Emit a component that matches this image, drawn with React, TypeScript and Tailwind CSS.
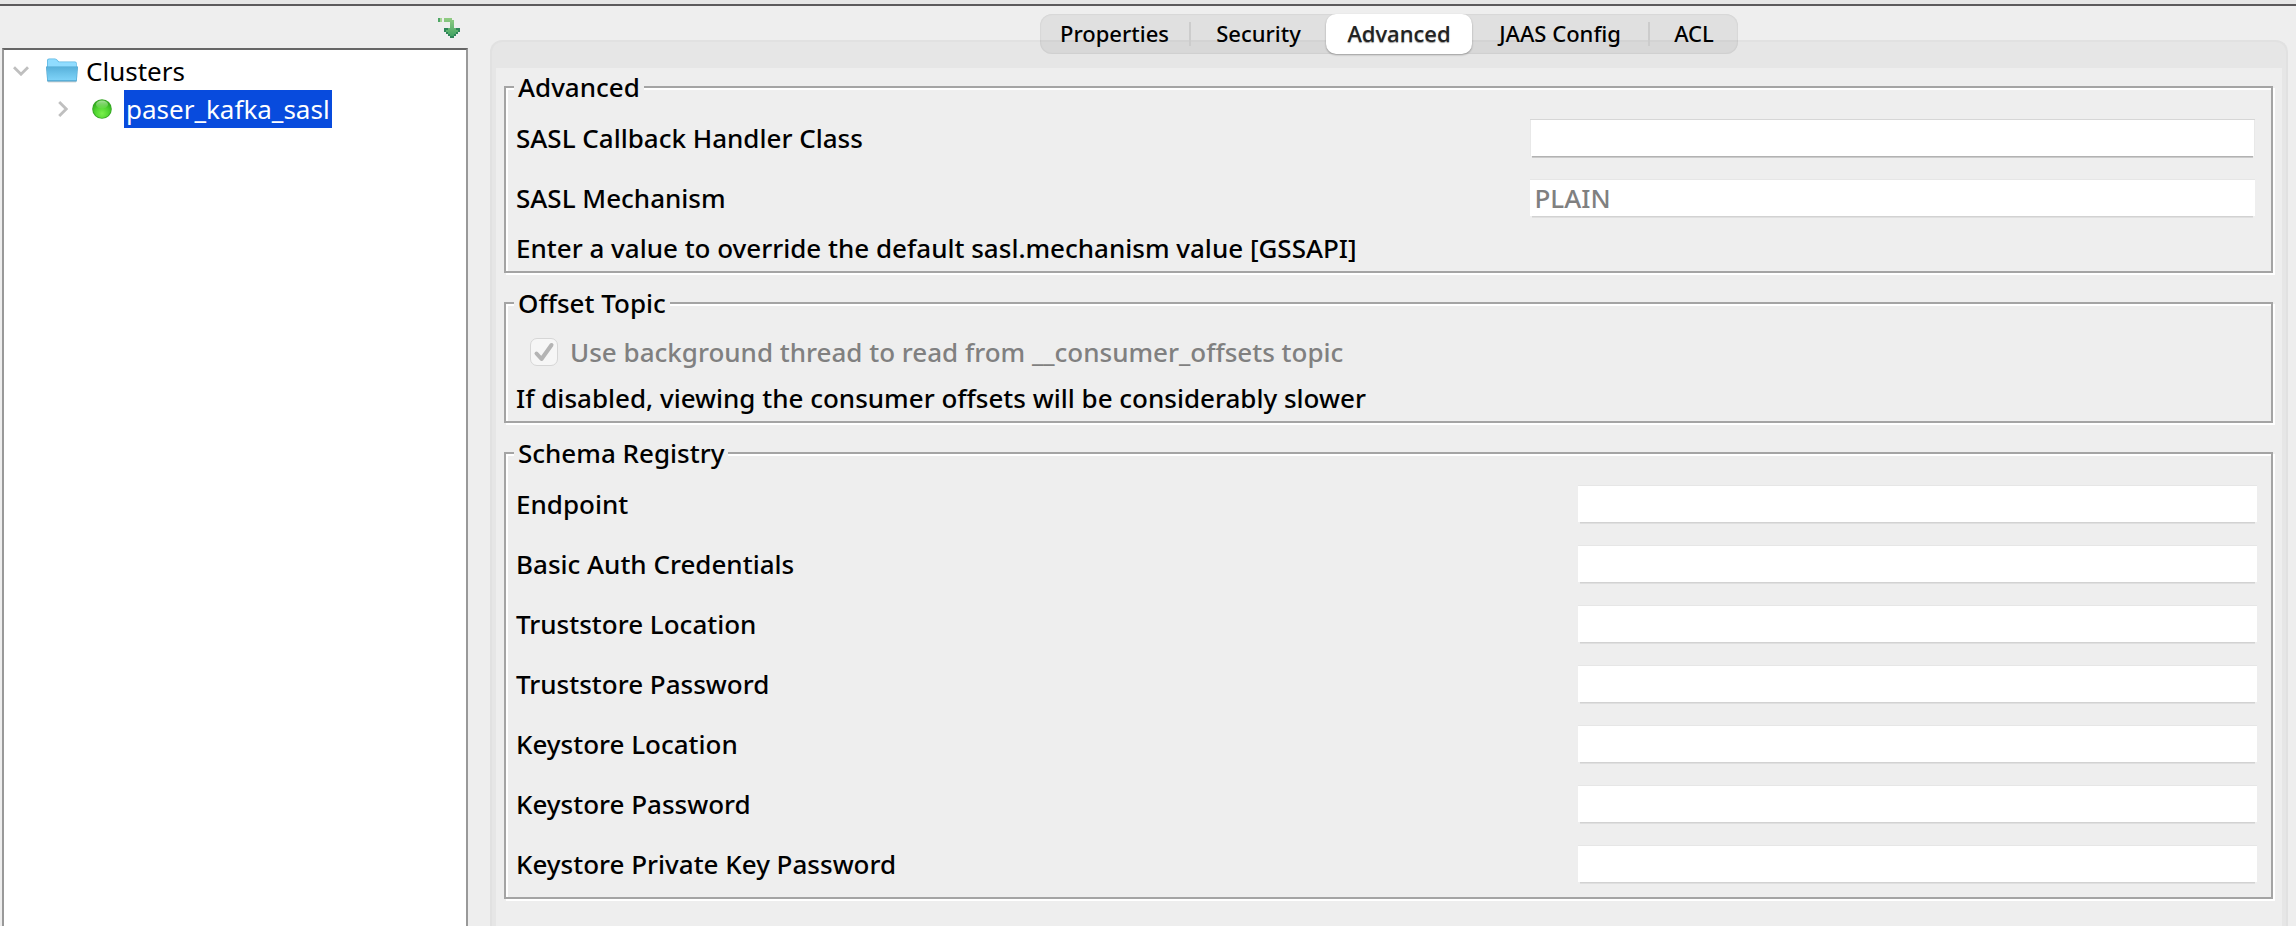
import type { ReactNode } from "react";

const tabs = [
  { label: "Properties", width: "w-[151px]", divider: true },
  { label: "Security", width: "w-[135px]", divider: false },
  { label: "Advanced", width: "w-[146px]", divider: false },
  { label: "JAAS Config", width: "w-[178px]", divider: true },
  { label: "ACL", width: "w-[88px]", divider: false },
];

const registryFields = [
  { id: "endpoint", label: "Endpoint", type: "text" },
  { id: "basic-auth", label: "Basic Auth Credentials", type: "text" },
  { id: "truststore-location", label: "Truststore Location", type: "text" },
  { id: "truststore-password", label: "Truststore Password", type: "password" },
  { id: "keystore-location", label: "Keystore Location", type: "text" },
  { id: "keystore-password", label: "Keystore Password", type: "password" },
  { id: "keystore-key-password", label: "Keystore Private Key Password", type: "password" },
];

function ArrowIcon() {
  return (
    <svg viewBox="0 0 22 20" className="h-5 w-[22px]" shapeRendering="crispEdges" aria-hidden="true">
      <defs>
        <linearGradient id="arrow" x1="0" y1="0" x2="0" y2="1">
          <stop offset="0" stopColor="#92cc83" />
          <stop offset="1" stopColor="#43a463" />
        </linearGradient>
      </defs>
      <path fill="#4fa765" d="M0 0h2v4H0z" />
      <path fill="#a5d493" d="M2 0h2v4H2z" />
      <path fill="url(#arrow)" d="M6 0h8v2h2v8h2v2h2v2h-2v2h-2v2h-4v-2h-2v-2H8v-2h2v-2h2V4H6z" />
      <path
        fill="#2f8558"
        d="M6 10h4v2H8v2H6zM18 10h4v4h-2v-2h-2zM8 14h2v2H8zM10 16h2v2h-2zM12 18h4v2h-4zM16 16h2v2h-2zM18 14h2v2h-2z"
      />
      <path fill="#5cb36c" d="M8 12h2v2H8zM18 12h2v2h-2z" />
    </svg>
  );
}

function FolderIcon() {
  return (
    <svg viewBox="0 0 32 26" className="h-[26px] w-8" aria-hidden="true">
      <defs>
        <linearGradient id="folder" x1="0" y1="0" x2="0" y2="1">
          <stop offset="0" stopColor="#58b0da" />
          <stop offset="0.5" stopColor="#6cc3ea" />
          <stop offset="1" stopColor="#7fd3f8" />
        </linearGradient>
      </defs>
      <path fill="#d6d6d6" d="M2 23h28v1.5H2z" />
      <path fill="#5fb8e2" d="M1 2.5Q1 .5 3 .5h6q1.500 0 2.500 1.500L13 3.500h16q1.800 0 1.800 2V10H1z" />
      <path fill="#90dcff" d="M1.800 2.800q0-1.500 1.500-1.500H9q1 0 2 1.300l1.500 1.700H29q1.200 0 1.200 1.500V9H1.800z" />
      <path fill="#4da3cd" d="M0 8.500h32L30.800 23.500H1.200z" />
      <path fill="url(#folder)" d="M.6 9h30.800L30.300 22.300H1.700z" />
    </svg>
  );
}

function StatusIcon() {
  return (
    <svg viewBox="0 0 20 20" className="size-5" role="img" aria-label="Connected">
      <defs>
        <radialGradient id="ball" cx="0.5" cy="0.75" r="0.65">
          <stop offset="0" stopColor="#7af04c" />
          <stop offset="0.6" stopColor="#4fd42f" />
          <stop offset="1" stopColor="#34ad1f" />
        </radialGradient>
        <linearGradient id="gloss" x1="0" y1="0" x2="0" y2="1">
          <stop offset="0" stopColor="#b4e8a6" stopOpacity="0.9" />
          <stop offset="1" stopColor="#8fdf78" stopOpacity="0.2" />
        </linearGradient>
      </defs>
      <circle cx="10" cy="10" r="9.800" fill="#36a624" />
      <circle cx="10" cy="10" r="9" fill="url(#ball)" />
      <ellipse cx="10" cy="5.500" rx="6" ry="4" fill="url(#gloss)" />
    </svg>
  );
}

function Group({ title, children }: { title: string; children: ReactNode }) {
  return (
    <fieldset className="border-2 border-[#a4a4a4] pr-[14px] pl-[10px] shadow-[inset_2px_2px_0_#ffffff,2px_2px_0_#ffffff]">
      <legend className="-ml-0.5 h-9 bg-[#eeeeee] px-1 pt-0.5 leading-8">{title}</legend>
      {children}
    </fieldset>
  );
}

const fieldBase = "h-9 bg-white px-1 text-[26px] leading-9 outline-none disabled:text-[#808080]";
const fieldPlain = "shadow-[0_-1px_0_#e6e6e6,0_3px_0_-2px_#d2d2d2,0_4px_0_-2px_#dfdfdf]";
const fieldStrong = "shadow-[inset_1px_0_0_#e8e8e8,inset_-1px_0_0_#e8e8e8,0_-1px_0_#d6d6d6,0_3px_0_-2px_#b2b2b2,0_4px_0_-2px_#cacaca]";

export default function App() {
  return (
    <div className="flex min-h-screen flex-col bg-[#eeeeee] font-['Noto_Sans',sans-serif] text-[26px] text-black">
      <div className="h-1.5 border-b-2 border-[#5c5a5c] bg-[#e6e6e6]" />
      <div className="flex grow">
        <aside className="flex w-[470px] shrink-0 flex-col px-0.5">
          <div className="flex h-[42px] items-center justify-end pr-2 pb-0.5">
            <button type="button" aria-label="Expand all" className="pt-1">
              <ArrowIcon />
            </button>
          </div>
          <ul className="grow border-x-2 border-t-2 border-x-[#999999] border-t-[#666666] bg-white pt-0.5">
            <li>
              <div className="flex h-[38px] items-center">
                <button type="button" aria-label="Collapse Clusters" className="ml-[9px]">
                  <svg viewBox="0 0 16 10" className="h-2.5 w-4" fill="none" stroke="#bfbfbf" strokeWidth="2.800" aria-hidden="true">
                    <path d="M1 1.200 8 8.200 15 1.200" />
                  </svg>
                </button>
                <span className="ml-[17px]">
                  <FolderIcon />
                </span>
                <span className="ml-2">Clusters</span>
              </div>
              <ul>
                <li className="flex h-[38px] items-center">
                  <button type="button" aria-label="Expand paser_kafka_sasl" className="ml-[54px]">
                    <svg viewBox="0 0 10 16" className="h-4 w-2.5" fill="none" stroke="#bfbfbf" strokeWidth="2.800" aria-hidden="true">
                      <path d="M1.200 1 8.200 8 1.200 15" />
                    </svg>
                  </button>
                  <span className="ml-6">
                    <StatusIcon />
                  </span>
                  <span className="ml-3 h-[38px] bg-[#084bdd] px-0.5 leading-[38px] text-white">paser_kafka_sasl</span>
                </li>
              </ul>
            </li>
          </ul>
        </aside>

        <main className="ml-5 mr-2 flex grow flex-col pt-2 font-medium">
          <div
            role="tablist"
            className="relative z-10 -mb-3.5 flex h-10 items-center self-center rounded-xl bg-black/[0.06] text-[22px] shadow-[inset_0_0_2px_#00000022]"
          >
            {tabs.map((tab) => {
              const active = tab.label === "Advanced";
              return (
                <div key={tab.label} className={`${tab.width} flex h-10 items-center`}>
                  <button
                    type="button"
                    role="tab"
                    aria-selected={active}
                    className={
                      active
                        ? "h-10 grow rounded-[10px] bg-white pb-0.5 text-[#222222] shadow-[0_1px_2px_#00000055] [text-shadow:0_1px_1px_#00000066]"
                        : "h-10 grow pb-0.5 whitespace-nowrap"
                    }
                  >
                    {tab.label}
                  </button>
                  {tab.divider && <span className="h-6 w-0.5 bg-[#cccccc]" />}
                </div>
              );
            })}
          </div>

          <section className="flex grow flex-col rounded-t-xl border-2 border-b-0 border-[#e1e1e1] bg-[#e6e6e6] px-1 pt-[26px]">
            <form className="flex grow flex-col gap-3 bg-[#eeeeee] pt-px pr-[9px] pl-2">
              <Group title="Advanced">
                <div className="flex h-[60px] items-center justify-between pt-1.5 pr-0.5">
                  <label htmlFor="callback-class">SASL Callback Handler Class</label>
                  <input id="callback-class" type="text" className={`${fieldBase} ${fieldStrong} w-5/12`} />
                </div>
                <div className="flex h-[60px] items-center justify-between pt-1.5 pr-0.5">
                  <label htmlFor="mechanism">SASL Mechanism</label>
                  <input id="mechanism" type="text" disabled defaultValue="PLAIN" className={`${fieldBase} ${fieldPlain} w-5/12`} />
                </div>
                <p className="h-[46px] leading-[46px]">Enter a value to override the default sasl.mechanism value [GSSAPI]</p>
              </Group>

              <Group title="Offset Topic">
                <div className="mt-2 flex h-[46px] items-center pl-3.5">
                  <span className="grid">
                    <input
                      id="background-thread"
                      type="checkbox"
                      defaultChecked
                      disabled
                      className="col-start-1 row-start-1 size-7 appearance-none rounded-[7px] border border-[#d6d6d6] bg-[#f6f6f6]"
                    />
                    <svg
                      viewBox="0 0 28 28"
                      className="pointer-events-none col-start-1 row-start-1 size-7"
                      fill="none"
                      stroke="#b4b4b4"
                      strokeWidth="4"
                      strokeLinecap="round"
                      strokeLinejoin="round"
                      aria-hidden="true"
                    >
                      <path d="M6.500 15.500 11.500 21 21.500 7" />
                    </svg>
                  </span>
                  <label htmlFor="background-thread" className="ml-3 text-[#808080]">
                    Use background thread to read from __consumer_offsets topic
                  </label>
                </div>
                <p className="h-[46px] leading-[46px]">If disabled, viewing the consumer offsets will be considerably slower</p>
              </Group>

              <Group title="Schema Registry">
                <div className="py-[3px]">
                  {registryFields.map((field) => (
                    <div key={field.id} className="flex h-[60px] items-center justify-between">
                      <label htmlFor={field.id}>{field.label}</label>
                      <input id={field.id} type={field.type} className={`${fieldBase} ${fieldPlain} w-[39%]`} />
                    </div>
                  ))}
                </div>
              </Group>
            </form>
          </section>
        </main>
      </div>
    </div>
  );
}
